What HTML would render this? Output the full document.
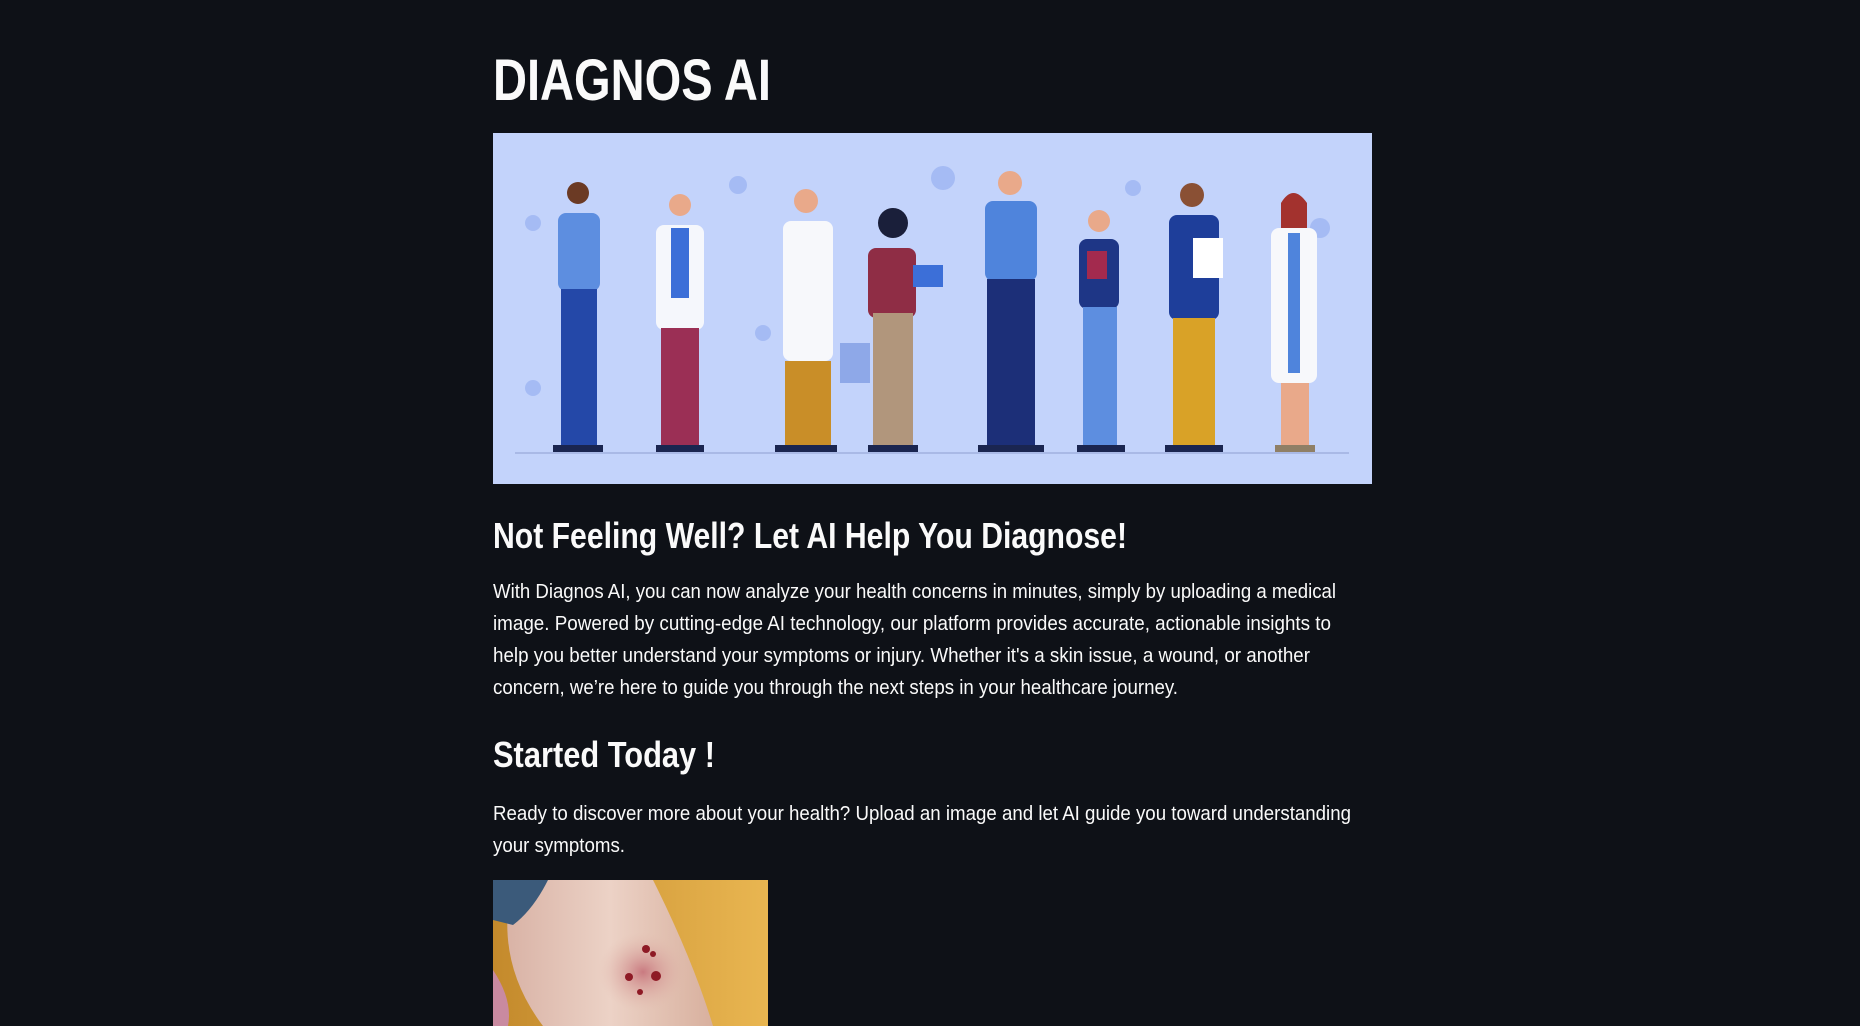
<!DOCTYPE html>
<html><head><meta charset="utf-8"><style>
html,body{margin:0;padding:0;background:#0e1117;width:1860px;height:1026px;overflow:hidden}
body{position:relative;font-family:"Liberation Sans",sans-serif;color:#fafafa}
.ln{position:absolute;left:493px;white-space:nowrap}
.ln span{display:inline-block;transform-origin:0 50%}
.b{font-size:20px;line-height:32px}
.t{font-size:58px;line-height:70px;font-weight:bold}
.h{font-size:36px;line-height:44px;font-weight:bold}
</style></head><body>
<div class="ln t" style="top:46px"><span data-w="278">DIAGNOS AI</span></div>

<svg style="position:absolute;left:493px;top:133px" width="879" height="351" viewBox="0 0 879 351">
<rect width="879" height="351" fill="#c3d3fb"/>
<line x1="22" y1="320" x2="856" y2="320" stroke="#a9b9e6" stroke-width="2"/>
<g fill="#9db5f2" opacity=".8"><circle cx="245" cy="52" r="9"/><circle cx="450" cy="45" r="12"/><circle cx="640" cy="55" r="8"/><circle cx="827" cy="95" r="10"/><circle cx="40" cy="90" r="8"/><circle cx="270" cy="200" r="8"/><circle cx="40" cy="255" r="8"/></g>
<!-- figure 1 -->
<g><circle cx="85" cy="60" r="11" fill="#6b3a24"/><rect x="65" y="80" width="42" height="78" rx="8" fill="#5d8ee0"/><rect x="68" y="156" width="36" height="160" fill="#2448a8"/><rect x="60" y="312" width="50" height="7" fill="#1a2550"/></g>
<!-- figure 2 -->
<g><circle cx="187" cy="72" r="11" fill="#e9a98a"/><rect x="163" y="92" width="48" height="105" rx="8" fill="#f5f7fc"/><rect x="178" y="95" width="18" height="70" fill="#3c6fd8"/><rect x="168" y="195" width="38" height="120" fill="#9b2f55"/><rect x="163" y="312" width="48" height="7" fill="#1a2550"/></g>
<!-- figure 3 -->
<g><circle cx="313" cy="68" r="12" fill="#e9a98a"/><rect x="290" y="88" width="50" height="140" rx="8" fill="#f7f8fb"/><rect x="292" y="228" width="46" height="88" fill="#c98e28"/><rect x="282" y="312" width="62" height="7" fill="#1a2550"/><rect x="347" y="210" width="30" height="40" fill="#8ea8e8"/></g>
<!-- figure 4 -->
<g><circle cx="400" cy="90" r="15" fill="#1a1f3a"/><rect x="375" y="115" width="48" height="70" rx="8" fill="#8f2d45"/><rect x="380" y="180" width="40" height="135" fill="#b1967c"/><rect x="375" y="312" width="50" height="7" fill="#1a2550"/><rect x="420" y="132" width="30" height="22" fill="#3c6fd8"/></g>
<!-- figure 5 -->
<g><circle cx="517" cy="50" r="12" fill="#e9a98a"/><rect x="492" y="68" width="52" height="80" rx="8" fill="#4f84dc"/><rect x="494" y="146" width="48" height="170" fill="#1c2f78"/><rect x="485" y="312" width="66" height="7" fill="#1a2550"/></g>
<!-- figure 6 -->
<g><circle cx="606" cy="88" r="11" fill="#e9a98a"/><rect x="586" y="106" width="40" height="70" rx="8" fill="#1e3686"/><rect x="590" y="174" width="34" height="142" fill="#5d8ee0"/><rect x="584" y="312" width="48" height="7" fill="#1a2550"/><rect x="594" y="118" width="20" height="28" fill="#a32a4e"/></g>
<!-- figure 7 -->
<g><circle cx="699" cy="62" r="12" fill="#8a5034"/><rect x="676" y="82" width="50" height="105" rx="8" fill="#1e3e9a"/><rect x="680" y="185" width="42" height="130" fill="#d9a227"/><rect x="672" y="312" width="58" height="7" fill="#1a2550"/><rect x="700" y="105" width="30" height="40" fill="#fff"/></g>
<!-- figure 8 -->
<g><circle cx="800" cy="76" r="12" fill="#e9a98a"/><path d="M788 70 q12-20 26 0 v40 h-26z" fill="#a3322e"/><rect x="778" y="95" width="46" height="155" rx="8" fill="#f7f8fb"/><rect x="795" y="100" width="12" height="140" fill="#4f84dc"/><rect x="788" y="250" width="28" height="66" fill="#e9a98a"/><rect x="782" y="312" width="40" height="7" fill="#8f7f66"/></g>
</svg>

<div class="ln h" style="top:514px"><span data-w="634">Not Feeling Well? Let AI Help You Diagnose!</span></div>
<div class="ln b" style="top:576px"><span data-w="843">With Diagnos AI, you can now analyze your health concerns in minutes, simply by uploading a medical</span></div>
<div class="ln b" style="top:608px"><span data-w="838">image. Powered by cutting-edge AI technology, our platform provides accurate, actionable insights to</span></div>
<div class="ln b" style="top:640px"><span data-w="817">help you better understand your symptoms or injury. Whether it's a skin issue, a wound, or another</span></div>
<div class="ln b" style="top:672px"><span data-w="685">concern, we’re here to guide you through the next steps in your healthcare journey.</span></div>
<div class="ln h" style="top:733px"><span data-w="222">Started Today !</span></div>
<div class="ln b" style="top:798px"><span data-w="858">Ready to discover more about your health? Upload an image and let AI guide you toward understanding</span></div>
<div class="ln b" style="top:830px"><span data-w="132">your symptoms.</span></div>

<svg style="position:absolute;left:493px;top:880px" width="275" height="146" viewBox="0 0 275 146">
<defs>
<linearGradient id="bg" x1="0" x2="1"><stop offset="0" stop-color="#c48a2c"/><stop offset="1" stop-color="#e9b651"/></linearGradient>
<linearGradient id="sk" x1="0" x2="1"><stop offset="0" stop-color="#d9b3a6"/><stop offset=".5" stop-color="#ecd2c6"/><stop offset="1" stop-color="#d8b09e"/></linearGradient>
<radialGradient id="wd" cx=".5" cy=".5" r=".5"><stop offset="0" stop-color="#c97a80"/><stop offset="1" stop-color="#e3bdb0" stop-opacity="0"/></radialGradient>
</defs>
<rect width="275" height="146" fill="url(#bg)"/>
<path d="M20 0 H160 Q200 80 220 146 H50 Q0 80 20 0Z" fill="url(#sk)"/>
<path d="M0 0 H55 Q40 30 20 45 L0 40Z" fill="#3b5a7a"/>
<path d="M0 90 Q20 120 15 146 H0Z" fill="#c98aa0"/>
<ellipse cx="150" cy="92" rx="45" ry="40" fill="url(#wd)"/>
<g fill="#8e1a25"><circle cx="153" cy="69" r="4"/><circle cx="136" cy="97" r="4"/><circle cx="163" cy="96" r="5"/><circle cx="147" cy="112" r="3"/><circle cx="160" cy="74" r="3"/></g>
</svg>

<script>
document.querySelectorAll('[data-w]').forEach(function(s){var w=s.getBoundingClientRect().width;var t=+s.getAttribute('data-w');if(w>0)s.style.transform='scaleX('+(t/w)+')';});
</script>
</body></html>
